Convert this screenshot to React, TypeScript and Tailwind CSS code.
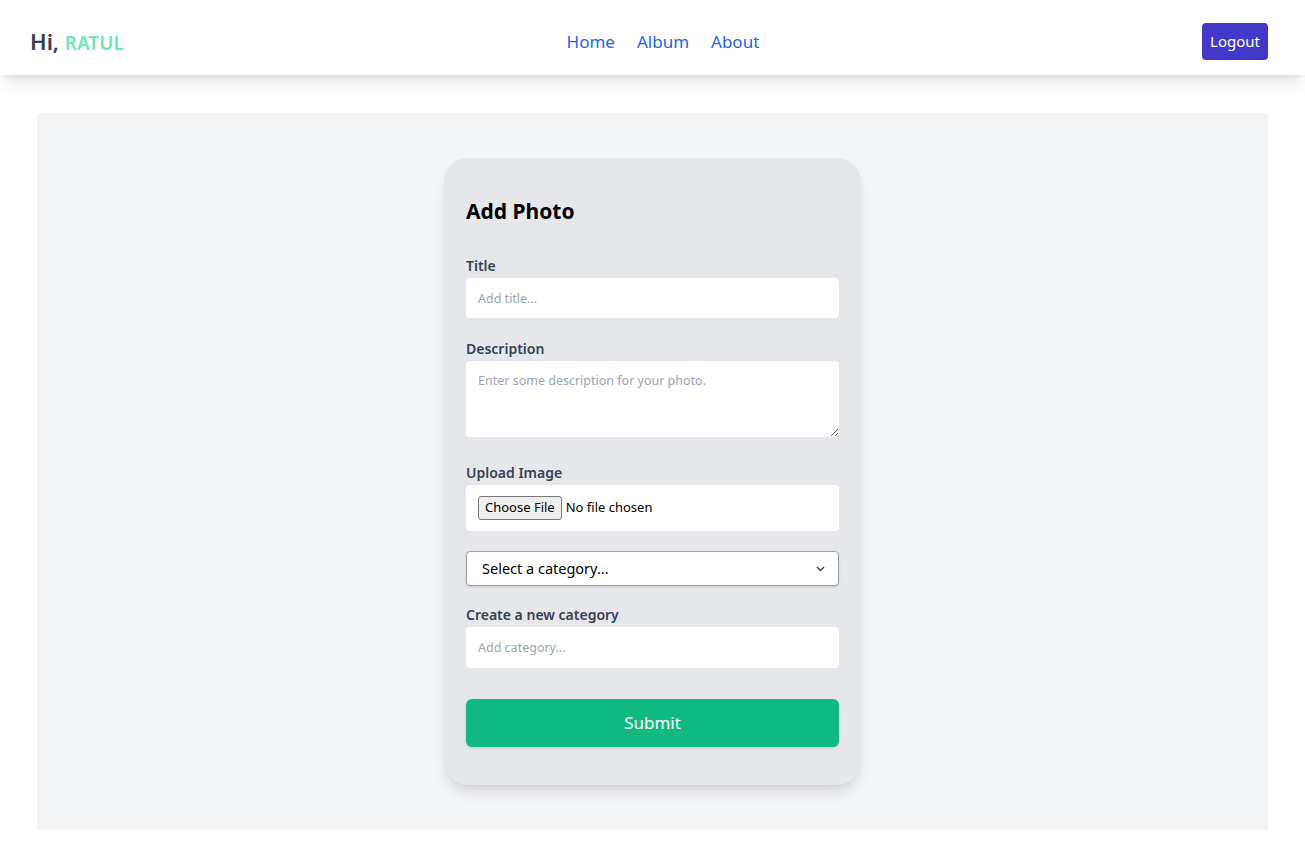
export default function App() {
  return (
    <div className="min-h-screen bg-white font-['Noto_Sans',sans-serif]">
      <header className="flex h-[75px] items-center justify-between bg-white pt-2 pl-[30px] pr-[37px] shadow-lg">
        <h1 className="text-[22px] font-semibold text-[#334155]">
          Hi, <span className="text-[19px] font-semibold text-[#6ee7b7]">RATUL</span>
        </h1>
        <nav className="flex gap-[22px] text-[17px] text-[#2563eb]">
          <a href="#">Home</a>
          <a href="#">Album</a>
          <a href="#">About</a>
        </nav>
        <button className="h-[37px] rounded bg-[#4338ca] px-2 text-[15px] text-white">Logout</button>
      </header>

      <main className="mx-[37px] mt-[38px] bg-[#f3f4f6] py-[45px]">
        <div className="mx-auto w-[417px] rounded-3xl bg-[#e5e7eb] px-[22px] pt-[37px] pb-[38px] shadow-lg">
          <h2 className="text-[21px] leading-8 font-bold text-black">Add Photo</h2>

          <form className="mt-[29px]" onSubmit={(e) => e.preventDefault()}>
            <label className="block text-[14px] leading-5 font-semibold text-[#374151]">Title</label>
            <input
              type="text"
              placeholder="Add title..."
              className="mt-[2px] block h-10 w-full rounded-sm bg-white px-3 text-[12.5px] placeholder:text-[#9ca3af] outline-none"
            />

            <label className="mt-[21px] block text-[14px] leading-5 font-semibold text-[#374151]">Description</label>
            <textarea
              placeholder="Enter some description for your photo."
              className="mt-[2px] block h-[76px] w-full rounded-sm bg-white px-3 pt-[11px] text-[12.5px] placeholder:text-[#9ca3af] outline-none"
            />

            <label className="mt-[26px] block text-[14px] leading-5 font-semibold text-[#374151]">Upload Image</label>
            <div className="mt-[2px] flex h-[46px] items-center rounded-sm bg-white px-3">
              <input
                type="file"
                className="text-[13px] text-black file:mr-1 file:rounded-[3px] file:border file:border-[#767676] file:bg-[#efefef] file:px-[6px] file:py-[1px] file:text-[13px]"
              />
            </div>

            <div className="relative mt-5">
              <select className="block h-[35px] w-full appearance-none rounded border border-[#9ca3af] bg-white px-[15px] text-[14.5px] text-black shadow-sm">
                <option>Select a category...</option>
              </select>
              <svg
                className="pointer-events-none absolute top-1/2 right-[14px] -translate-y-1/2"
                width="9"
                height="6"
                viewBox="0 0 9 6"
                fill="none"
                stroke="#374151"
                strokeWidth="1.4"
              >
                <path d="M1 1l3.5 3.5L8 1" />
              </svg>
            </div>

            <label className="mt-[19px] block text-[14px] leading-5 font-semibold text-[#374151]">
              Create a new category
            </label>
            <input
              type="text"
              placeholder="Add category..."
              className="mt-[2px] block h-[41px] w-full rounded-sm bg-white px-3 text-[12.5px] placeholder:text-[#9ca3af] outline-none"
            />

            <button
              type="submit"
              className="mt-[31px] h-12 w-full rounded-md bg-[#10b981] text-[17px] text-white shadow-sm"
            >
              Submit
            </button>
          </form>
        </div>
      </main>
    </div>
  )
}
